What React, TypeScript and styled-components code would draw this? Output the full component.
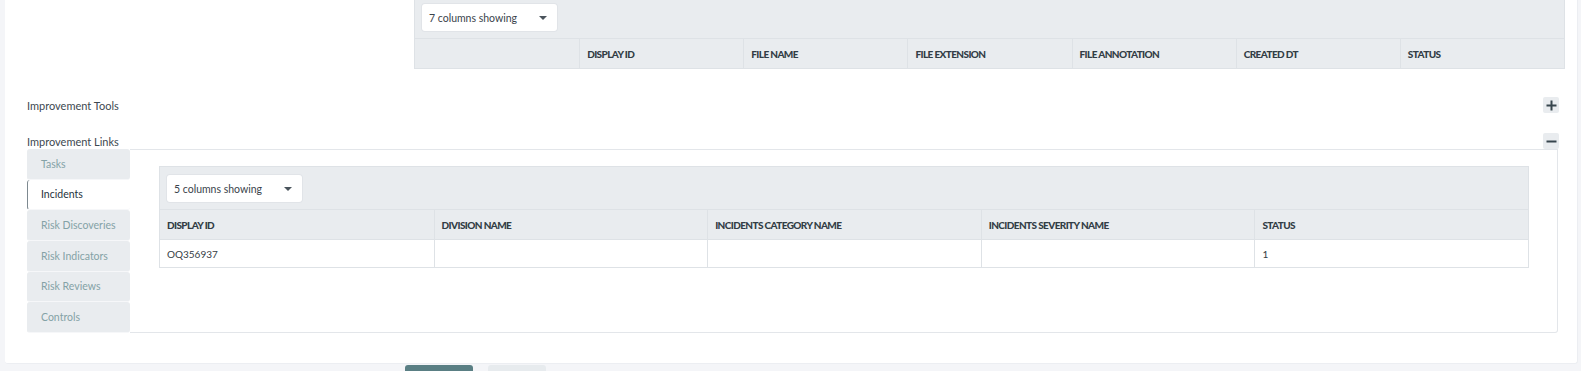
import React from "react";
import styled, { createGlobalStyle } from "styled-components";

const GlobalStyle = createGlobalStyle`
  html, body {
    margin: 0;
    padding: 0;
    background: #f4f5f8;
    font-family: Lato, "Noto Sans", sans-serif;
    color: #333c44;
  }
`;

const Page = styled.div`
  display: flex;
  flex-direction: column;
  margin-top: -5px;
`;

const Card = styled.div`
  background: #ffffff;
  margin: 0 3px 0 5px;
  padding: 0 12px 30px 22px;
  border-right: 1px solid #eceef2;
  border-bottom: 1px solid #eceef2;
  border-radius: 0 0 3px 3px;
`;

const FieldRow = styled.div`
  display: grid;
  grid-template-columns: 387px 1fr;
`;

const TableWrap = styled.div`
  border: 1px solid #dee2e6;
  background: #e9ecef;
`;

const Toolbar = styled.div`
  padding: 8px 7px 7px;
`;

const ColumnSelect = styled.button`
  display: flex;
  align-items: center;
  justify-content: space-between;
  width: 135px;
  height: 27px;
  padding: 0 10px 0 7px;
  border: none;
  border-radius: 3px;
  background: #ffffff;
  box-shadow: 0 0 0 1px #e1e4e8;
  font-family: Lato, "Noto Sans", sans-serif;
  font-size: 10.5px;
  color: #3a434b;
  cursor: pointer;
`;

const Caret = styled.span`
  width: 0;
  height: 0;
  border-left: 4px solid transparent;
  border-right: 4px solid transparent;
  border-top: 4px solid #4a545c;
`;

const Row = styled.div<{ $cols: number; $body?: boolean }>`
  display: grid;
  grid-template-columns: repeat(${(p) => p.$cols}, 1fr);
  border-top: 1px solid #dee2e6;
  background: ${(p) => (p.$body ? "#ffffff" : "#e9ecef")};
`;

const HeadCell = styled.div`
  height: 29px;
  padding: 0 7px;
  display: flex;
  align-items: center;
  font-family: Lato, "Noto Sans", sans-serif;
  font-weight: 900;
  font-size: 10px;
  letter-spacing: -0.6px;
  text-transform: uppercase;
  color: #323d45;
  white-space: nowrap;
  & + & {
    border-left: 1px solid #dee2e6;
  }
`;

const BodyCell = styled.div`
  height: 27px;
  padding: 0 7px;
  display: flex;
  align-items: center;
  font-size: 10px;
  color: #343c44;
  & + & {
    border-left: 1px solid #dee2e6;
  }
`;

const Section = styled.div<{ $gap: number }>`
  margin: ${(p) => p.$gap}px 6px 0 0;
`;

const SectionHeader = styled.div`
  display: flex;
  align-items: center;
  justify-content: space-between;
  height: 16px;
`;

const SectionLabel = styled.span`
  font-size: 11px;
  color: #3d4850;
`;

const ToggleButton = styled.button`
  width: 16px;
  height: 16px;
  padding: 0;
  border: none;
  border-radius: 2px;
  background: #e9ecef;
  display: flex;
  align-items: center;
  justify-content: center;
  cursor: pointer;
`;

const Panel = styled.div`
  display: flex;
  margin-right: 1px;
`;

const TabList = styled.div`
  width: 103px;
  display: flex;
  flex-direction: column;
`;

const Tab = styled.div<{ $active?: boolean }>`
  height: calc(184px / 6);
  box-sizing: border-box;
  padding-left: 13px;
  display: flex;
  align-items: center;
  font-size: 10.5px;
  border-radius: 3px;
  background: ${(p) => (p.$active ? "#ffffff" : "#e9ecef")};
  color: ${(p) => (p.$active ? "#26343d" : "#84a2a6")};
  border-left: 1px solid ${(p) => (p.$active ? "#7d8990" : "#e9ecef")};
  border-bottom: 1px solid #f6f7f9;
`;

const TabContent = styled.div`
  flex: 1;
  border: 1px solid #e3e6ea;
  border-left: none;
  border-radius: 0 0 3px 0;
  padding: 16px 28px 0 29px;
`;

const Footer = styled.div`
  display: flex;
  gap: 15px;
  padding: 1px 0 0 405px;
`;

const FooterButton = styled.button<{ $primary?: boolean }>`
  width: ${(p) => (p.$primary ? 68 : 58)}px;
  height: 30px;
  border: none;
  border-radius: 3px;
  background: ${(p) => (p.$primary ? "#5a7f84" : "#e7ebee")};
`;

function Plus() {
  return (
    <svg width="11" height="11" viewBox="0 0 11 11">
      <path d="M5.5 0.5v10M0.5 5.5h10" stroke="#37454d" strokeWidth="2" />
    </svg>
  );
}

function Minus() {
  return (
    <svg width="11" height="11" viewBox="0 0 11 11">
      <path d="M0.5 5.5h10" stroke="#37454d" strokeWidth="2" />
    </svg>
  );
}

type DataTableProps = {
  showing: string;
  columns: string[];
  rows?: string[][];
};

function DataTable({ showing, columns, rows = [] }: DataTableProps) {
  return (
    <TableWrap>
      <Toolbar>
        <ColumnSelect>
          {showing}
          <Caret />
        </ColumnSelect>
      </Toolbar>
      <Row $cols={columns.length}>
        {columns.map((c, i) => (
          <HeadCell key={i}>{c}</HeadCell>
        ))}
      </Row>
      {rows.map((r, i) => (
        <Row key={i} $cols={columns.length} $body>
          {r.map((v, j) => (
            <BodyCell key={j}>{v}</BodyCell>
          ))}
        </Row>
      ))}
    </TableWrap>
  );
}

const tabs = [
  "Tasks",
  "Incidents",
  "Risk Discoveries",
  "Risk Indicators",
  "Risk Reviews",
  "Controls",
];

export default function App() {
  return (
    <>
      <GlobalStyle />
      <Page>
        <Card>
          <FieldRow>
            <div />
            <DataTable
              showing="7 columns showing"
              columns={[
                "",
                "Display ID",
                "File Name",
                "File Extension",
                "File Annotation",
                "Created DT",
                "Status",
              ]}
            />
          </FieldRow>

          <Section $gap={28}>
            <SectionHeader>
              <SectionLabel>Improvement Tools</SectionLabel>
              <ToggleButton aria-label="Expand">
                <Plus />
              </ToggleButton>
            </SectionHeader>
          </Section>

          <Section $gap={20}>
            <SectionHeader>
              <SectionLabel>Improvement Links</SectionLabel>
              <ToggleButton aria-label="Collapse">
                <Minus />
              </ToggleButton>
            </SectionHeader>
            <Panel>
              <TabList>
                {tabs.map((t) => (
                  <Tab key={t} $active={t === "Incidents"}>
                    {t}
                  </Tab>
                ))}
              </TabList>
              <TabContent>
                <DataTable
                  showing="5 columns showing"
                  columns={[
                    "Display ID",
                    "Division Name",
                    "Incidents Category Name",
                    "Incidents Severity Name",
                    "Status",
                  ]}
                  rows={[["OQ356937", "", "", "", "1"]]}
                />
              </TabContent>
            </Panel>
          </Section>
        </Card>
        <Footer>
          <FooterButton $primary aria-label="Save" />
          <FooterButton aria-label="Cancel" />
        </Footer>
      </Page>
    </>
  );
}
